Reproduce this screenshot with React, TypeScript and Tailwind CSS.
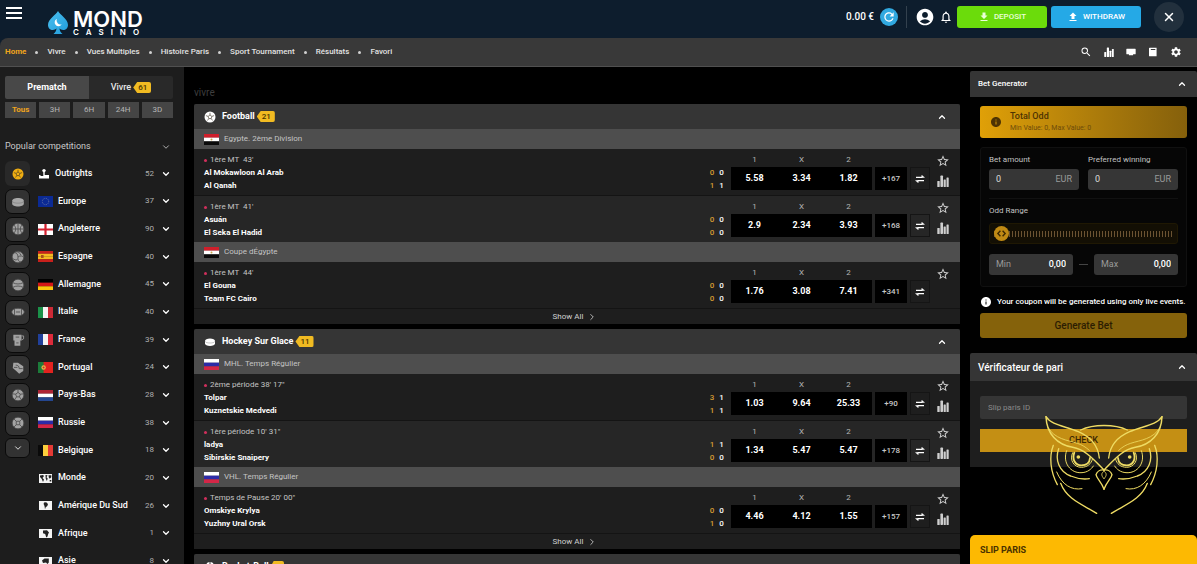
import { useState, type ReactNode } from 'react';
import {
  MdAccountCircle,
  MdFileDownload,
  MdFileUpload,
  MdInfo,
  MdOutlineNotifications,
  MdRefresh,
  MdSearch,
  MdSettings,
  MdSportsBasketball,
  MdStarBorder,
} from 'react-icons/md';
import { ChevronDown, ChevronRight, ChevronUp, X } from 'lucide-react';

/* ---------- flags ---------- */

function Stripes({ colors, vertical = false }: { colors: string[]; vertical?: boolean }) {
  const n = colors.length;
  return (
    <>
      {colors.map((c, i) =>
        vertical ? (
          <rect key={i} x={(15 / n) * i} y="0" width={15 / n + 0.1} height="11" fill={c} />
        ) : (
          <rect key={i} x="0" y={(11 / n) * i} width="15" height={11 / n + 0.1} fill={c} />
        ),
      )}
    </>
  );
}

const flagArt: Record<string, ReactNode> = {
  eu: (
    <>
      <rect width="15" height="11" fill="#0b2a94" />
      <circle cx="7.5" cy="5.5" r="3.2" fill="none" stroke="#7f86a8" strokeWidth="0.8" strokeDasharray="0.8 0.9" />
    </>
  ),
  england: (
    <>
      <rect width="15" height="11" fill="#fff" />
      <path d="M7.5 0v11M0 5.5h15" stroke="#d3202f" strokeWidth="2.2" />
    </>
  ),
  spain: (
    <>
      <Stripes colors={['#c8201c', '#f5b921', '#f5b921', '#c8201c']} />
      <rect x="3" y="4" width="2.6" height="3" fill="#a8501c" />
    </>
  ),
  germany: <Stripes colors={['#000', '#d41717', '#fbc60c']} />,
  italy: <Stripes vertical colors={['#1b9149', '#f4f4f4', '#cc2a36']} />,
  france: <Stripes vertical colors={['#21409a', '#f4f4f4', '#dd2b3b']} />,
  portugal: (
    <>
      <rect width="15" height="11" fill="#e2231f" />
      <rect width="5.6" height="11" fill="#1c7c3a" />
      <circle cx="5.6" cy="5.5" r="2.2" fill="#e8b84a" />
      <circle cx="5.6" cy="5.5" r="1" fill="#c8352c" />
    </>
  ),
  netherlands: <Stripes colors={['#ae2435', '#fff', '#24468f']} />,
  russia: <Stripes colors={['#fff', '#2c2ba8', '#d32647']} />,
  belgium: <Stripes vertical colors={['#0a0a0a', '#fbce3c', '#e33a35']} />,
  egypt: (
    <>
      <Stripes colors={['#cf1f2b', '#fff', '#0a0a0a']} />
      <circle cx="7.5" cy="5.5" r="1" fill="#c9a34a" />
    </>
  ),
  world: (
    <>
      <rect x="1" y="1" width="13" height="9" fill="#f4f4f4" />
      <path d="M2 2.5l3-.5 1 1-1.5 2L6 6.500l-1 2.500-1.200-3L2 4zM7.500 2l2 .2-1 2 1.200 1.200-.8 2.600-1.200-2.500zM10.500 2.200h2.800v2l-1.500 1.500-1-1.200zM11.700 7h1.600v1.500h-1.600z" fill="#222" />
    </>
  ),
  southAmerica: (
    <>
      <rect x="1" y="1" width="13" height="9" fill="#f4f4f4" />
      <path d="M6 2.500l2.200-.3L10 4l-.7 2-1.600 1.200L7 9.200 6.500 6 5.600 4z" fill="#222" />
    </>
  ),
  africa: (
    <>
      <rect x="1" y="1" width="13" height="9" fill="#f4f4f4" />
      <path d="M5 2.500l4-.3 2 2.300-.8 1.500-.7 2.500-1.200.9L7.200 6 5 5.300z" fill="#222" />
    </>
  ),
  asia: (
    <>
      <rect x="1" y="1" width="13" height="9" fill="#f4f4f4" />
      <path d="M4 4.500L6.500 2.500h4.300v4L9.500 8 8 6.500 5 7z" fill="#222" />
    </>
  ),
};

function Flag({ code }: { code: string }) {
  return (
    <svg viewBox="0 0 15 11" className="h-[11px] w-[15px] shrink-0" aria-hidden="true">
      {flagArt[code]}
    </svg>
  );
}

/* ---------- small icons ---------- */

function OutrightsIcon() {
  return (
    <svg viewBox="0 0 12 12" className="size-3 shrink-0" fill="#fff" aria-hidden="true">
      <circle cx="6" cy="2.600" r="1.700" />
      <path d="M5.300 4h1.400v3H11v3.500H1V7h1.500v1h2.800z" />
    </svg>
  );
}

function StatsIcon({ className }: { className: string }) {
  return (
    <svg viewBox="0 0 12 12" className={className} fill="currentColor" aria-hidden="true">
      <rect x="0.300" y="6" width="2.400" height="6" rx="0.500" />
      <rect x="3.400" y="0.500" width="2.600" height="11.500" rx="0.700" />
      <rect x="6.600" y="4.500" width="2.200" height="7.500" rx="0.500" />
      <rect x="9.500" y="2.500" width="2.200" height="9.500" rx="0.600" />
    </svg>
  );
}

function SwapIcon() {
  return (
    <svg viewBox="0 0 12 10" className="h-2 w-2.5" fill="none" stroke="#fff" strokeWidth="1.500" aria-hidden="true">
      <path d="M1 3h8M3 7h8" />
      <path d="M8.200.4L11.600 3H8.200zM3.800 9.600L.4 7h3.400z" fill="#fff" stroke="#fff" strokeWidth="0.600" />
    </svg>
  );
}

function ScreenIcon() {
  return (
    <svg viewBox="0 0 12 12" className="size-2.5" fill="#fff" aria-hidden="true">
      <path d="M1 2h10a.6.6 0 01.6.6V8a.8.8 0 01-.8.800H8.500V10h-5V8.800H1.200A.8.8 0 01.4 8V2.600A.6.6 0 011 2z" />
    </svg>
  );
}

function SlipIcon() {
  return (
    <svg viewBox="0 0 12 12" className="size-2.5" fill="#fff" aria-hidden="true">
      <path fillRule="evenodd" d="M2 .8h8.300v10.400H2a.8.8 0 01-.8-.8V1.600A.8.8 0 012 .8zM3.400 2.300v1.200h5.400V2.300z" />
    </svg>
  );
}

function PuckIcon({ className }: { className: string }) {
  return (
    <svg viewBox="0 0 12 12" className={className} fill="currentColor" aria-hidden="true">
      <path d="M1 5c0-1.600 2.200-2.500 5-2.500S11 3.400 11 5v2.600c0 1.500-2.200 2.300-5 2.300s-5-.8-5-2.300z" />
      <path d="M1 5.300C1.500 6.500 3.500 7 6 7s4.500-.5 5-1.700" fill="none" stroke="#6a6a6a" strokeWidth="0.400" />
    </svg>
  );
}

function SoccerBall({ className }: { className: string }) {
  return (
    <svg viewBox="0 0 12 12" className={className} aria-hidden="true">
      <circle cx="6" cy="6" r="5.500" fill="currentColor" />
      <path
        d="M6 4l1.900 1.400-.7 2.200H4.800l-.7-2.200zM6 4V1.800M7.900 5.400l2.200-.8M7.200 7.600l1.400 1.900M4.800 7.600L3.400 9.500M4.100 5.400l-2.200-.8"
        fill="none"
        stroke="#3a3323"
        strokeOpacity="0.750"
        strokeWidth="0.800"
      />
    </svg>
  );
}

const sportArt: Record<string, ReactNode> = {
  basket: (
    <>
      <circle cx="6" cy="6" r="5" />
      <path d="M6 1v10M1 6h10M2.500 2.500c2 2 2 5 0 7M9.500 2.500c-2 2-2 5 0 7" />
    </>
  ),
  volley: (
    <>
      <circle cx="6" cy="6" r="5" />
      <path fill="none" d="M6 6C6 3.500 4.500 2 2.800 2.500M6 6c2-1.500 4-1 5 .5M6 6c-.5 2.500.5 4 2.500 4.300M3.500 1.700C6 1 8 2.500 8.500 4.500M1.200 7C3 8.500 4 9 5.500 8" />
    </>
  ),
  tennis: (
    <>
      <circle cx="6" cy="6" r="5" />
      <path fill="none" d="M1.500 4c3 1.500 6 1.500 9 0M1.500 8c3-1.500 6-1.500 9 0" />
    </>
  ),
  rugby: (
    <>
      <ellipse cx="6" cy="6" rx="5.400" ry="3.200" />
      <path d="M3 3.600v4.800M9 3.600v4.800M4.200 6h3.600" />
    </>
  ),
  esport: (
    <>
      <path d="M2 1.500h7v5H2zM3 6.500h5V11H3z" stroke="none" />
      <path fill="none" d="M9 2.500h1.800v2.500L9 6" stroke="#a3a3a3" />
      <path d="M4 3.500h3M4.500 8.500h2" />
    </>
  ),
  boxing: (
    <>
      <path d="M2 1.500h4l4.500 3v4L7 11 4.500 8.500 1.500 6z" stroke="none" />
      <path fill="none" d="M4 3.500c2 0 3 1 3 3M7 6.500h3M2.500 5.500h3" />
    </>
  ),
  hand: (
    <>
      <circle cx="6" cy="6" r="5" />
      <path fill="none" d="M6 3.800l2 1.500-.8 2.300H4.800L4 5.300zM6 1v2.800M11 5l-3 .3M9 10L7.200 7.600M3 10l1.800-2.400M1 5l3 .3" />
    </>
  ),
  futsal: (
    <>
      <circle cx="6" cy="6" r="5" />
      <path fill="none" d="M4.500 4.500h3v3h-3zM4.500 4.500L2.500 2.500M7.500 4.500l2-2M4.500 7.500l-2 2M7.500 7.500l2 2" />
    </>
  ),
};

function SportGlyph({ kind }: { kind: string }) {
  if (kind === 'soccer') return <SoccerBall className="size-3 text-[#f0ae12]" />;
  if (kind === 'puck') return <PuckIcon className="size-3.5 text-[#a8a8a8]" />;
  return (
    <svg viewBox="0 0 12 12" className="size-3.5" fill="#a3a3a3" stroke="#4a4a4a" strokeWidth="0.700" aria-hidden="true">
      {sportArt[kind]}
    </svg>
  );
}

/* ---------- header ---------- */

function Logo() {
  return (
    <a href="#" className="flex items-center gap-[5px]" aria-label="Mond Casino">
      <svg viewBox="0 0 20 24" className="h-6 w-5" aria-hidden="true">
        <defs>
          <linearGradient id="spade" x1="0" y1="0" x2="1" y2="1">
            <stop offset="0" stopColor="#4cc0ee" />
            <stop offset="1" stopColor="#1f9bdc" />
          </linearGradient>
        </defs>
        <path
          d="M10 0C8 4 0 8 0 14c0 3 2.200 5 4.800 5 1.600 0 2.900-.6 3.700-1.700C8.300 19.800 7.400 21.500 5.500 23h9c-1.900-1.500-2.800-3.200-3-5.700.8 1.100 2.100 1.700 3.700 1.700C17.800 19 20 17 20 14 20 8 12 4 10 0z"
          fill="url(#spade)"
        />
        <path d="M8.800 8a3.800 3.800 0 105 5.200 4 4 0 01-5-5.200z" fill="#fff" />
      </svg>
      <span className="flex flex-col text-white">
        <span className="font-['Inter',sans-serif] text-[22px] leading-[18px] font-semibold">MOND</span>
        <span className="font-['Inter',sans-serif] text-[8px] leading-[8px] font-semibold tracking-[7px]">CASINO</span>
      </span>
    </a>
  );
}

function Header() {
  return (
    <header className="flex h-[38px] shrink-0 items-center bg-[#0d1d2d]">
      <button type="button" aria-label="Menu" className="ml-1.5 flex w-4 flex-col gap-[3px] self-start pt-[7px]">
        <span className="h-0.5 bg-white" />
        <span className="h-0.5 bg-white" />
        <span className="h-0.5 bg-white" />
      </button>
      <div className="ml-[26px] pt-2">
        <Logo />
      </div>
      <div className="ml-auto flex h-full items-center pb-[5px]">
        <span className="text-[10px] font-medium text-white">0.00 €</span>
        <button type="button" aria-label="Refresh balance" className="ml-1.5 flex size-[18px] items-center justify-center rounded-full bg-[#31a9e0] text-white">
          <MdRefresh className="size-3.5" />
        </button>
        <span className="mx-2 h-[22px] w-px bg-[#33414e]" />
        <button type="button" aria-label="Account" className="text-white">
          <MdAccountCircle className="size-5" />
        </button>
        <button type="button" aria-label="Notifications" className="ml-1 text-white">
          <MdOutlineNotifications className="size-[14px]" />
        </button>
        <button type="button" className="ml-1 flex h-[22px] w-[90px] items-center justify-center gap-1 rounded-[3px] bg-[#6bdc0b] text-[8px] font-medium text-[#eaffd8]">
          <MdFileDownload className="size-3" />
          DEPOSIT
        </button>
        <button type="button" className="ml-1 flex h-[22px] w-[90px] items-center justify-center gap-1 rounded-[3px] bg-[#25a9e6] text-[8px] font-medium text-white">
          <MdFileUpload className="size-3" />
          WITHDRAW
        </button>
        <button type="button" aria-label="Close" className="mr-[13px] ml-[13px] flex size-[30px] items-center justify-center rounded-full bg-[#22303d] text-white">
          <X className="size-3.5" strokeWidth={2.5} />
        </button>
      </div>
    </header>
  );
}

const navLinks = ['Home', 'Vivre', 'Vues Multiples', 'Histoire Paris', 'Sport Tournament', 'Résultats', 'Favori'];

function NavBar() {
  return (
    <nav className="flex h-[29px] shrink-0 items-center rounded-tl-lg border-b border-[#505050] bg-[#393939] pl-[5px]">
      <ul className="flex items-center gap-[9px]">
        {navLinks.map((label, i) => (
          <li key={label} className="flex items-center gap-[9px]">
            {i > 0 && <span className="size-[3px] rounded-full bg-[#d0d0d0]" />}
            <a href="#" className={i === 0 ? 'text-[8px] font-bold text-[#f0a41c]' : 'text-[8px] font-medium text-[#e2e2e2]'}>
              {label}
            </a>
          </li>
        ))}
      </ul>
      <div className="mr-[15px] ml-auto flex items-center gap-3 text-white">
        <button type="button" aria-label="Search"><MdSearch className="size-3" /></button>
        <button type="button" aria-label="Statistics"><StatsIcon className="size-2.5" /></button>
        <button type="button" aria-label="Live view"><ScreenIcon /></button>
        <button type="button" aria-label="Bet slip"><SlipIcon /></button>
        <button type="button" aria-label="Settings"><MdSettings className="size-3" /></button>
      </div>
    </nav>
  );
}

function CountBadge({ value }: { value: number }) {
  return (
    <span className="inline-flex h-[11px] items-center rounded-r-[2px] bg-[#f1bb22] pr-1 pl-[5px] text-[8px] font-medium text-[#4a3500] [clip-path:polygon(0_50%,22%_0,100%_0,100%_100%,22%_100%)]">
      {value}
    </span>
  );
}

/* ---------- sidebar ---------- */

const sports = ['soccer', 'puck', 'basket', 'volley', 'tennis', 'rugby', 'esport', 'boxing', 'hand', 'futsal'];

const competitions: { name: string; flag?: string; count: number }[] = [
  { name: 'Outrights', count: 52 },
  { name: 'Europe', flag: 'eu', count: 37 },
  { name: 'Angleterre', flag: 'england', count: 90 },
  { name: 'Espagne', flag: 'spain', count: 40 },
  { name: 'Allemagne', flag: 'germany', count: 45 },
  { name: 'Italie', flag: 'italy', count: 40 },
  { name: 'France', flag: 'france', count: 39 },
  { name: 'Portugal', flag: 'portugal', count: 24 },
  { name: 'Pays-Bas', flag: 'netherlands', count: 28 },
  { name: 'Russie', flag: 'russia', count: 38 },
  { name: 'Belgique', flag: 'belgium', count: 18 },
  { name: 'Monde', flag: 'world', count: 20 },
  { name: 'Amérique Du Sud', flag: 'southAmerica', count: 26 },
  { name: 'Afrique', flag: 'africa', count: 1 },
  { name: 'Asie', flag: 'asia', count: 8 },
];

const periods = ['Tous', '3H', '6H', '24H', '3D'];

function Sidebar() {
  const [period, setPeriod] = useState('Tous');
  const [sport, setSport] = useState('soccer');
  return (
    <aside className="flex w-[184px] shrink-0 flex-col overflow-hidden bg-[#1d1d1d] pt-[9px] pr-[11px] pl-[5px]">
      <div className="grid shrink-0 grid-cols-2 overflow-hidden rounded-[2px]">
        <button type="button" className="h-[23px] bg-[#484848] text-[9px] font-bold text-white">Prematch</button>
        <button type="button" className="flex h-[23px] items-center justify-center gap-[2px] bg-[#292929] text-[9px] font-medium text-[#e6e6e6]">
          Vivre
          <CountBadge value={61} />
        </button>
      </div>
      <div className="mt-[3px] grid shrink-0 grid-cols-5 gap-[3px]">
        {periods.map((p) => (
          <button
            key={p}
            type="button"
            onClick={() => setPeriod(p)}
            className={
              p === period
                ? 'h-4 bg-[#454545] text-[8px] font-bold text-[#f0a41c]'
                : 'h-4 bg-[#454545] text-[8px] text-[#b5b5b5]'
            }
          >
            {p}
          </button>
        ))}
      </div>
      <button type="button" className="mt-4 flex h-[26px] shrink-0 items-center justify-between pr-[2px] text-[9px] text-[#c9c9c9]">
        Popular competitions
        <ChevronDown className="size-2.5" />
      </button>
      <div className="flex shrink-0 items-start">
        <div className="w-[25px] shrink-0">
          <div className="grid h-[277px] auto-rows-fr items-center">
            {sports.map((kind) => (
              <button
                key={kind}
                type="button"
                aria-label={kind}
                onClick={() => setSport(kind)}
                className={
                  kind === sport
                    ? 'flex h-[25px] items-center justify-center rounded-[6px] bg-[#292929]'
                    : 'flex h-[25px] items-center justify-center rounded-[7px] border border-[#0a0a0a] bg-[#323232]'
                }
              >
                <SportGlyph kind={kind} />
              </button>
            ))}
          </div>
          <button
            type="button"
            aria-label="More sports"
            className="mt-px flex h-5 w-full items-center justify-center rounded-[6px] border border-[#0a0a0a] bg-[#323232] text-white"
          >
            <ChevronDown className="size-2.5" />
          </button>
        </div>
        <ul className="ml-2 grid h-[415px] grow auto-rows-fr">
          {competitions.map((c) => (
            <li key={c.name}>
              <button type="button" className="flex size-full items-center text-[9px] font-medium text-white">
                {c.flag ? <Flag code={c.flag} /> : <OutrightsIcon />}
                <span className="ml-[5px]">{c.name}</span>
                <span className="ml-auto text-[8px] font-normal text-[#b0b0b0]">{c.count}</span>
                <ChevronDown className="mr-[2px] ml-[7px] size-2.5" strokeWidth={3} />
              </button>
            </li>
          ))}
        </ul>
      </div>
    </aside>
  );
}

/* ---------- live matches ---------- */

type Match = {
  time: string;
  teams: [string, string];
  scores: [[number, number], [number, number]];
  odds: [string, string, string];
  more: number;
  stats?: boolean;
};

type League = { name: string; flag: string; matches: Match[] };

const football: League[] = [
  {
    name: 'Egypte. 2ème Division',
    flag: 'egypt',
    matches: [
      { time: "1ère MT  43'", teams: ['Al Mokawloon Al Arab', 'Al Qanah'], scores: [[0, 0], [1, 1]], odds: ['5.58', '3.34', '1.82'], more: 167, stats: true },
      { time: "1ère MT  41'", teams: ['Asuán', 'El Seka El Hadid'], scores: [[0, 0], [0, 0]], odds: ['2.9', '2.34', '3.93'], more: 168, stats: true },
    ],
  },
  {
    name: 'Coupe dÉgypte',
    flag: 'egypt',
    matches: [
      { time: "1ère MT  44'", teams: ['El Gouna', 'Team FC Cairo'], scores: [[0, 0], [0, 0]], odds: ['1.76', '3.08', '7.41'], more: 341 },
    ],
  },
];

const hockey: League[] = [
  {
    name: 'MHL. Temps Régulier',
    flag: 'russia',
    matches: [
      { time: '2ème période 38\' 17"', teams: ['Tolpar', 'Kuznetskie Medvedi'], scores: [[3, 1], [1, 1]], odds: ['1.03', '9.64', '25.33'], more: 90, stats: true },
      { time: '1ère période 10\' 31"', teams: ['ladya', 'Sibirskie Snaipery'], scores: [[1, 1], [0, 0]], odds: ['1.34', '5.47', '5.47'], more: 178, stats: true },
    ],
  },
  {
    name: 'VHL. Temps Régulier',
    flag: 'russia',
    matches: [
      { time: 'Temps de Pause 20\' 00"', teams: ['Omskiye Krylya', 'Yuzhny Ural Orsk'], scores: [[0, 0], [1, 0]], odds: ['4.46', '4.12', '1.55'], more: 157, stats: true },
    ],
  },
];

function MatchRow({ match }: { match: Match }) {
  return (
    <li className="box-content flex h-[46px] items-stretch border-b border-[#141414] bg-[#1e1e1e] pl-[10px] last:border-b-0 even:bg-[#262626]">
      <div className="grow pt-[5px]">
        <p className="flex h-3 items-center gap-[3px] text-[8px] whitespace-pre text-[#c4c4c4]">
          <span className="size-[3px] rounded-full bg-[#d02f5c]" />
          {match.time}
        </p>
        {match.teams.map((team, i) => (
          <p key={i} className="flex h-[13px] items-center text-[8px] font-bold text-white">
            <span className="grow">{team}</span>
            <span className="w-[10px] text-center font-medium text-[#d49c33]">{match.scores[i][0]}</span>
            <span className="mr-[5px] w-[9px] text-center font-medium">{match.scores[i][1]}</span>
          </p>
        ))}
      </div>
      <div className="grid w-[141px] grid-cols-3 grid-rows-[16px_23px] pt-[2px]">
        {['1', 'X', '2'].map((h) => (
          <span key={h} className="self-center pt-px text-center text-[8px] text-[#b8b8b8]">{h}</span>
        ))}
        {match.odds.map((odd, i) => (
          <button key={i} type="button" className="bg-black text-[9px] font-bold text-white">{odd}</button>
        ))}
      </div>
      <button type="button" className="mt-[18px] ml-[3px] h-[23px] w-8 bg-black text-[8px] font-medium text-[#c8c8c8]">+{match.more}</button>
      <button type="button" aria-label="Change market" className="mt-[18px] ml-[3px] flex h-[23px] w-5 items-center justify-center border border-[#151515]">
        <SwapIcon />
      </button>
      <div className="flex w-[30px] flex-col items-center pt-[5px] pr-1 text-[#cfcfcf]">
        <button type="button" aria-label="Add to favourites"><MdStarBorder className="size-3.5" /></button>
        {match.stats && (
          <button type="button" aria-label="Match statistics" className="mt-[7px]"><StatsIcon className="size-3" /></button>
        )}
      </div>
    </li>
  );
}

function SportSection({ title, icon, count, leagues }: { title: string; icon: ReactNode; count: number; leagues: League[] }) {
  return (
    <section className="shrink-0 overflow-hidden rounded-t-[2px] bg-[#1e1e1e]">
      <h2 className="flex h-[25px] items-center bg-[#353535] pr-[13px] pl-[10px] text-[9px] font-bold text-white">
        <span className="flex w-[18px] items-center">{icon}</span>
        <span className="mr-[2px]">{title}</span>
        <CountBadge value={count} />
        <ChevronUp className="ml-auto size-2.5" strokeWidth={3} />
      </h2>
      {leagues.map((league) => (
        <div key={league.name}>
          <h3 className="flex h-5 items-center gap-[5px] bg-[#4e4e4e] pl-[10px] text-[8px] text-[#c4c4c4]">
            <Flag code={league.flag} />
            {league.name}
          </h3>
          <ul>
            {league.matches.map((m) => (
              <MatchRow key={m.teams[0]} match={m} />
            ))}
          </ul>
        </div>
      ))}
      <button type="button" className="flex h-4 w-full items-center justify-center gap-1 border-t border-[#141414] pr-1 text-[8px] text-[#d0d0d0]">
        Show All
        <ChevronRight className="size-2.5" />
      </button>
    </section>
  );
}

/* ---------- right column ---------- */

function PanelHeader({ children, className }: { children: ReactNode; className: string }) {
  return (
    <h2 className={`flex items-center justify-between rounded-t-[2px] bg-[#353535] pr-[10px] pl-2 font-medium text-white ${className}`}>
      {children}
      <ChevronUp className="size-2.5" strokeWidth={3} />
    </h2>
  );
}

function AmountField({ id, label }: { id: string; label: string }) {
  return (
    <div>
      <label htmlFor={id} className="block h-[14px] text-[8px] leading-[10px] text-[#c2c2c2]">{label}</label>
      <div className="flex h-[21px] items-center rounded-[3px] bg-[#363636] px-[7px]">
        <input id={id} defaultValue="0" className="w-0 grow bg-transparent text-[9px] text-[#dcdcdc] outline-none" />
        <span className="text-[9px] text-[#9a9a9a]">EUR</span>
      </div>
    </div>
  );
}

function RangeField({ id, label }: { id: string; label: string }) {
  return (
    <div className="flex h-[21px] grow basis-0 items-center rounded-[3px] bg-[#363636] px-[7px] text-[9px]">
      <label htmlFor={id} className="text-[#9a9a9a]">{label}</label>
      <input id={id} defaultValue="0,00" className="w-0 grow bg-transparent text-right font-medium text-white outline-none" />
    </div>
  );
}

function OddSlider() {
  return (
    <div className="relative mt-[7px] flex h-[21px] items-center rounded-[3px] border border-[#1f1803] bg-[#130f04] px-1">
      <input
        id="odd-range"
        type="range"
        defaultValue={0}
        className="h-[15px] w-full appearance-none bg-[repeating-linear-gradient(90deg,#6b5332_0_1px,transparent_1px_3px)] bg-[length:100%_6px] bg-center bg-no-repeat outline-none [&::-webkit-slider-thumb]:size-[15px] [&::-webkit-slider-thumb]:appearance-none [&::-webkit-slider-thumb]:rounded-full [&::-webkit-slider-thumb]:bg-[#c08a14]"
      />
      <svg viewBox="0 0 12 12" className="pointer-events-none absolute left-[6px] size-[11px]" fill="none" stroke="#3d2a02" strokeWidth="1.500" aria-hidden="true">
        <path d="M4.800 3L2 6l2.800 3M7.200 3L10 6 7.200 9" />
      </svg>
    </div>
  );
}

function BetGenerator() {
  return (
    <section className="shrink-0">
      <PanelHeader className="h-[26px] text-[8px]">Bet Generator</PanelHeader>
      <div className="bg-[#010101] px-[10px] pt-[9px] pb-[15px]">
        <div className="flex h-8 items-center gap-2 rounded-[3px] bg-linear-to-r from-[#e0a007] to-[#85600b] px-[10px] text-[#4d3303]">
          <MdInfo className="size-3" />
          <div>
            <p className="text-[9px] leading-[12px] font-medium">Total Odd</p>
            <p className="text-[7px] leading-[12px] text-[#6e4c0a]">Min Value: 0, Max Value: 0</p>
          </div>
        </div>
        <div className="mt-[9px] rounded-[3px] border border-[#101010] bg-[#060606] px-2 pt-[7px] pb-[11px]">
          <div className="grid grid-cols-2 gap-[9px] border-b border-[#111] pb-2">
            <AmountField id="bet-amount" label="Bet amount" />
            <AmountField id="preferred-winning" label="Preferred winning" />
          </div>
          <label htmlFor="odd-range" className="mt-[7px] block text-[8px] leading-[10px] text-[#c2c2c2]">Odd Range</label>
          <OddSlider />
          <div className="mt-[10px] flex items-center gap-[6px]">
            <RangeField id="min-odd" label="Min" />
            <span className="h-px w-[9px] bg-[#444]" />
            <RangeField id="max-odd" label="Max" />
          </div>
        </div>
        <p className="flex h-[26px] items-center gap-[5px] pt-1 text-[8px] font-medium text-white">
          <MdInfo className="size-3" />
          Your coupon will be generated using only live events.
        </p>
        <button type="button" className="block h-[25px] w-full rounded-[3px] bg-[#85620b] text-[10px] font-medium text-[#2c1d02]">
          Generate Bet
        </button>
      </div>
    </section>
  );
}

function BetChecker() {
  return (
    <section className="shrink-0">
      <PanelHeader className="h-7 text-[10px]">Vérificateur de pari</PanelHeader>
      <div className="bg-[#1e1e1e] px-[10px] pt-[15px] pb-[15px]">
        <input
          aria-label="Slip paris ID"
          placeholder="Slip paris ID"
          className="block h-[23px] w-full rounded-[2px] bg-[#353535] px-2 text-[8px] text-white outline-none placeholder:text-[#8a8a8a]"
        />
        <button type="button" className="mt-[10px] block h-[23px] w-full bg-[#c48f14] text-[9px] font-medium text-[#3b2703]">
          CHECK
        </button>
      </div>
    </section>
  );
}

function OwlHalf() {
  return (
    <>
      <path d="M18 20C34 46 75 48 115 65C150 80 174 105 178 144" />
      <path d="M18 20C20 72 52 104 98 112C138 119 164 152 192 180" strokeWidth="4.500" />
      <path d="M24 52C44 88 82 90 112 100C126 104 138 112 148 121" strokeWidth="2.500" />
      <path d="M40 106C26 142 32 186 52 224" />
      <path d="M56 116C44 150 58 186 92 198C112 206 130 209 148 206" />
      <path d="M80 122C66 158 92 191 126 188C142 187 154 178 160 168" strokeWidth="3" />
      <path d="M98 128C87 150 102 172 124 172C142 172 154 161 157 148" strokeWidth="3" />
      <path d="M103 128C95 148 106 166 124 166C140 166 149 157 150 144" strokeWidth="5.500" />
      <circle cx="115" cy="141" r="5.500" fill="#eedb63" stroke="none" />
      <path d="M50 186C66 224 94 242 126 236" strokeWidth="3" />
      <path d="M62 220C80 268 128 284 170 310" />
      <path d="M192 180C180 178 171 185 168 194C170 206 184 215 192 238" />
      <path d="M192 184C184 188 182 196 192 206" strokeWidth="2.500" />
    </>
  );
}

function Owl() {
  return (
    <svg
      viewBox="15 15 354 300"
      className="pointer-events-none absolute right-[34px] bottom-[49px] h-[100px] w-[118px]"
      fill="none"
      stroke="#eedb63"
      strokeWidth="4"
      strokeLinecap="round"
      aria-hidden="true"
    >
      <path d="M122 60C160 42 224 42 262 60" />
      <OwlHalf />
      <g transform="translate(384 0) scale(-1 1)">
        <OwlHalf />
      </g>
    </svg>
  );
}

export default function App() {
  return (
    <div className="relative flex h-screen flex-col overflow-hidden bg-[#0d1d2d] font-['Roboto',sans-serif]">
      <Header />
      <NavBar />
      <div className="flex min-h-0 grow bg-black">
        <Sidebar />
        <main className="flex min-w-0 grow flex-col gap-[5px] overflow-hidden px-[10px] pt-[19px]">
          <h1 className="h-[13px] shrink-0 text-[10px] leading-[13px] text-[#3d3d3d]">vivre</h1>
          <SportSection title="Football" count={21} leagues={football} icon={<SoccerBall className="size-3" />} />
          <SportSection title="Hockey Sur Glace" count={11} leagues={hockey} icon={<PuckIcon className="size-3" />} />
          <SportSection title="Basket-Ball" count={6} leagues={[]} icon={<MdSportsBasketball className="size-3" />} />
        </main>
        <div className="flex w-[227px] shrink-0 flex-col overflow-hidden pt-1">
          <BetGenerator />
          <BetChecker />
          <button type="button" className="mt-auto h-[29px] shrink-0 rounded-t-[5px] bg-[#fdb902] px-[10px] pt-[2px] text-left text-[9px] font-bold text-[#4a3200]">
            SLIP PARIS
          </button>
        </div>
      </div>
      <Owl />
    </div>
  );
}
